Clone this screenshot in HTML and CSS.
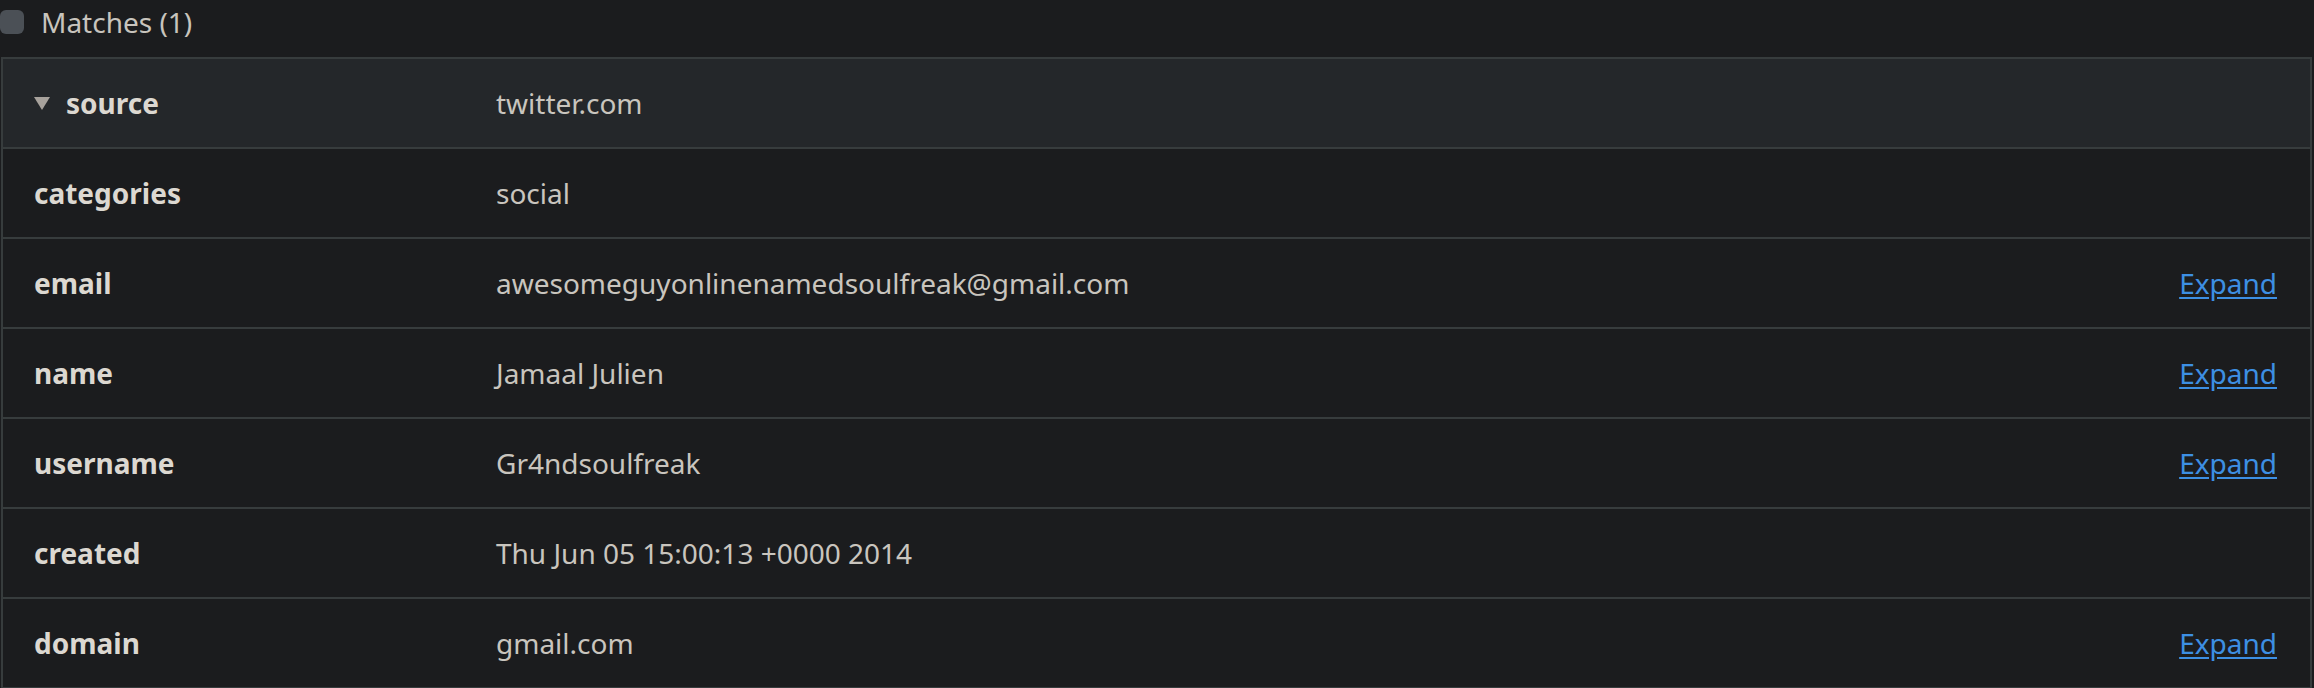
FILE: index.html
```html
<!DOCTYPE html>
<html>
<head>
<meta charset="utf-8">
<link rel="stylesheet" href="styles.css">
</head>
<body>
<div class="page">
  <div class="matches">
    <span class="checkbox"></span>
    <span class="matches-label">Matches (1)</span>
  </div>
  <div class="table">
    <div class="row head">
      <div class="key"><span class="caret"></span>source</div>
      <div class="val">twitter.com</div>
      <div class="act"></div>
    </div>
    <div class="row">
      <div class="key">categories</div>
      <div class="val">social</div>
      <div class="act"></div>
    </div>
    <div class="row">
      <div class="key">email</div>
      <div class="val">awesomeguyonlinenamedsoulfreak@gmail.com</div>
      <div class="act"><a class="expand" href="#">Expand</a></div>
    </div>
    <div class="row">
      <div class="key">name</div>
      <div class="val">Jamaal Julien</div>
      <div class="act"><a class="expand" href="#">Expand</a></div>
    </div>
    <div class="row">
      <div class="key">username</div>
      <div class="val">Gr4ndsoulfreak</div>
      <div class="act"><a class="expand" href="#">Expand</a></div>
    </div>
    <div class="row">
      <div class="key">created</div>
      <div class="val">Thu Jun 05 15:00:13 +0000 2014</div>
      <div class="act"></div>
    </div>
    <div class="row">
      <div class="key">domain</div>
      <div class="val">gmail.com</div>
      <div class="act"><a class="expand" href="#">Expand</a></div>
    </div>
  </div>
</div>
</body>
</html>
```
FILE: styles.css
```css
html, body {
  margin: 0;
  padding: 0;
  background: #1b1c1e;
}
body {
  font-family: "Noto Sans", "Open Sans", sans-serif;
  color: #d3cfc8;
  overflow: hidden;
}
.page {
  width: 2314px;
}
.matches {
  display: flex;
  align-items: center;
  gap: 17px;
  height: 44px;
  margin-bottom: 13px;
}
.checkbox {
  width: 24px;
  height: 24px;
  border-radius: 6px;
  background: #4b5056;
  flex: none;
}
.matches-label {
  font-size: 28px;
  color: #c8c4bd;
}
.table {
  margin: 0 2px 0 1px;
  border: 2px solid #373c3d;
  border-bottom: none;
}
.row {
  display: grid;
  grid-template-columns: 493px 1fr auto;
  align-items: center;
  height: 88px;
  border-bottom: 2px solid #373c3d;
  font-size: 28px;
}
.row.head {
  background: #24272a;
}
.key {
  padding-left: 31px;
  font-weight: 700;
  color: #dcd8d1;
  display: flex;
  align-items: center;
}
.caret {
  width: 0;
  height: 0;
  border-left: 8px solid transparent;
  border-right: 8px solid transparent;
  border-top: 13px solid #a7a29c;
  margin-right: 16px;
}
.val {
  color: #c9c5be;
}
.act {
  padding-right: 33px;
}
.expand {
  color: #3d8fe3;
  text-decoration: underline;
  text-underline-offset: 3px;
}
```
